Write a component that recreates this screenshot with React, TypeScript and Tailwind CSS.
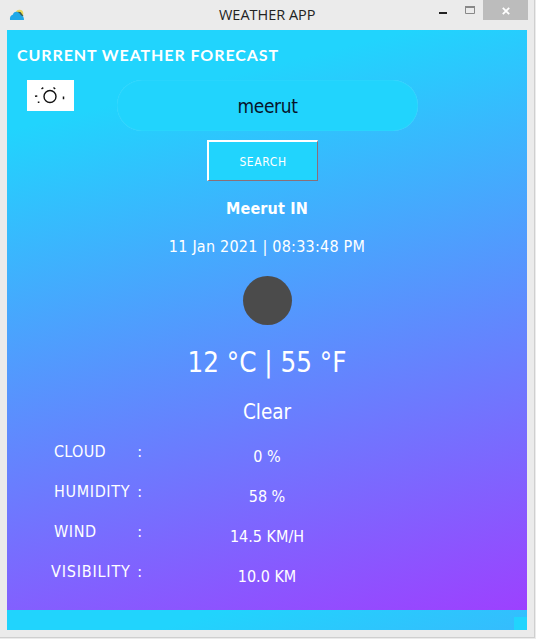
const readings = [
  { label: "CLOUD", value: "0 %", pad: "pl-[47px]", spacing: "tracking-[0.3px]" },
  { label: "HUMIDITY", value: "58 %", pad: "pl-[47px]", spacing: "tracking-[0.65px]" },
  { label: "WIND", value: "14.5 KM/H", pad: "pl-[47px]", spacing: "tracking-[0.6px]" },
  { label: "VISIBILITY", value: "10.0 KM", pad: "pl-[44px]", spacing: "tracking-[0.82px]" },
];

function CloudIcon() {
  return (
    <svg width="16" height="12" viewBox="0 0 16 12" className="mt-[9px] ml-[9px] shrink-0">
      <circle cx="10.500" cy="4.600" r="3.800" fill="#e8d75a" />
      <path d="M8.500 2.800l3 .2 3 4-2 1z" fill="#3d5a50" />
      <path d="M1 11C.5 8 2 6 4 5.500 4.500 3 6.500 2.200 8.500 3c2 .7 2.800 2 3.300 3.300C14.500 7 15 9 15 11z" fill="#20a9e8" />
    </svg>
  );
}

function SunIcon() {
  return (
    <svg width="47" height="31" viewBox="0 0 47 31" className="ml-[20px] shrink-0 bg-white">
      <circle cx="23" cy="16.500" r="6" fill="none" stroke="#111" strokeWidth="1.400" />
      <path d="M14.500 9l1.800-1.300M26.500 7.500l1.700 1.500M8 16.300l2.300-.4M10.800 22.300h1.600M36.500 16.500v2.800" fill="none" stroke="#111" strokeWidth="1.500" />
    </svg>
  );
}

export default function App() {
  return (
    <div className="flex h-[639px] w-[536px] flex-col overflow-hidden bg-[#ebebeb] font-['DejaVu_Sans_Condensed','DejaVu_Sans',sans-serif]">
      <div className="flex h-[638px] w-[535px] flex-col border-r border-b border-[#cfcfcf]">
        <header className="flex h-[30px] shrink-0 text-[#222]">
          <CloudIcon />
          <h1 className="ml-[194px] w-[98px] whitespace-nowrap font-['Open_Sans',sans-serif] text-[14.500px] leading-[29px] tracking-[-0.02px]">WEATHER APP</h1>
          <svg width="45" height="20" className="ml-[115px] shrink-0">
            <rect x="7" y="12" width="8" height="2" fill="#222" />
            <path d="M33.500 7v6.500h9V7" fill="none" stroke="#888" />
            <rect x="33" y="6" width="10" height="2" fill="#888" />
          </svg>
          <div className="ml-[6px] flex h-[20px] w-[45px] items-center justify-center bg-[#bcbcbc]">
            <svg width="8" height="8" viewBox="0 0 8 8" className="mt-px">
              <path d="M.8.8l6.400 6.400M7.200.8L.8 7.200" stroke="#fff" strokeWidth="1.800" />
            </svg>
          </div>
        </header>
        <main className="ml-[7px] flex h-[580px] w-[520px] shrink-0 flex-col bg-[linear-gradient(166deg,#21d4fd_98px,#b721ff_815px)] text-white">
          <h2 className="ml-[10px] h-[50px] whitespace-nowrap font-['Lato',sans-serif] text-[16px] leading-[50px] font-bold tracking-[0.92px]">CURRENT WEATHER FORECAST</h2>
          <div className="flex h-[51px]">
            <SunIcon />
            <div className="ml-[43px] flex h-[51px] w-[301px] items-center justify-center rounded-[25px] bg-[#21d4fd] pt-[2px] text-[19px] tracking-[-0.35px] text-[#07142b] shadow-[inset_0_0_1px_rgba(255,255,255,0.35)]">
              <span>meerut</span>
            </div>
          </div>
          <button className="mt-[9px] ml-[200px] flex h-[41px] w-[111px] items-center justify-center border-t-2 border-r-[1.5px] border-b-[1.5px] border-l-2 border-t-white border-r-[#8b6f78] border-b-[#8b6f78] border-l-white bg-[#21d4fd] pt-px text-[12px] tracking-[0.6px]">SEARCH</button>
          <p className="mt-[16px] h-[24px] text-center text-[16px] leading-[24px] font-bold tracking-[0.15px]">Meerut IN</p>
          <p className="mt-[14px] h-[24px] text-center text-[16px] leading-[24px] tracking-[0.23px]">11 Jan 2021 | 08:33:48 PM</p>
          <div className="mt-[17px] ml-[236px] size-[49px] shrink-0 rounded-full bg-[#4b4b4b]" />
          <p className="mt-[16px] h-[40px] text-center text-[27.500px] leading-[42px]">12 °C | 55 °F</p>
          <p className="mt-[16px] h-[30px] text-center text-[20.500px] leading-[30px]">Clear</p>
          <dl className="mt-[13px] flex flex-col">
            {readings.map((r) => (
              <div key={r.label} className="flex h-[40px] text-[16px] leading-[24px]">
                <dt className={`flex w-[135px] shrink-0 justify-between whitespace-nowrap ${r.pad}`}>
                  <span className={r.spacing}>{r.label}</span>
                  <span>:</span>
                </dt>
                <dd className="mt-[5px] w-[250px] text-center">{r.value}</dd>
              </div>
            ))}
          </dl>
        </main>
        <footer className="ml-[7px] flex h-[20px] w-[520px] shrink-0 items-end justify-end bg-[linear-gradient(164deg,#21d4fd_60px,#b721ff_806px)]">
          <div className="h-[13px] w-[13px] bg-[#21d4fd]" />
        </footer>
      </div>
    </div>
  );
}
